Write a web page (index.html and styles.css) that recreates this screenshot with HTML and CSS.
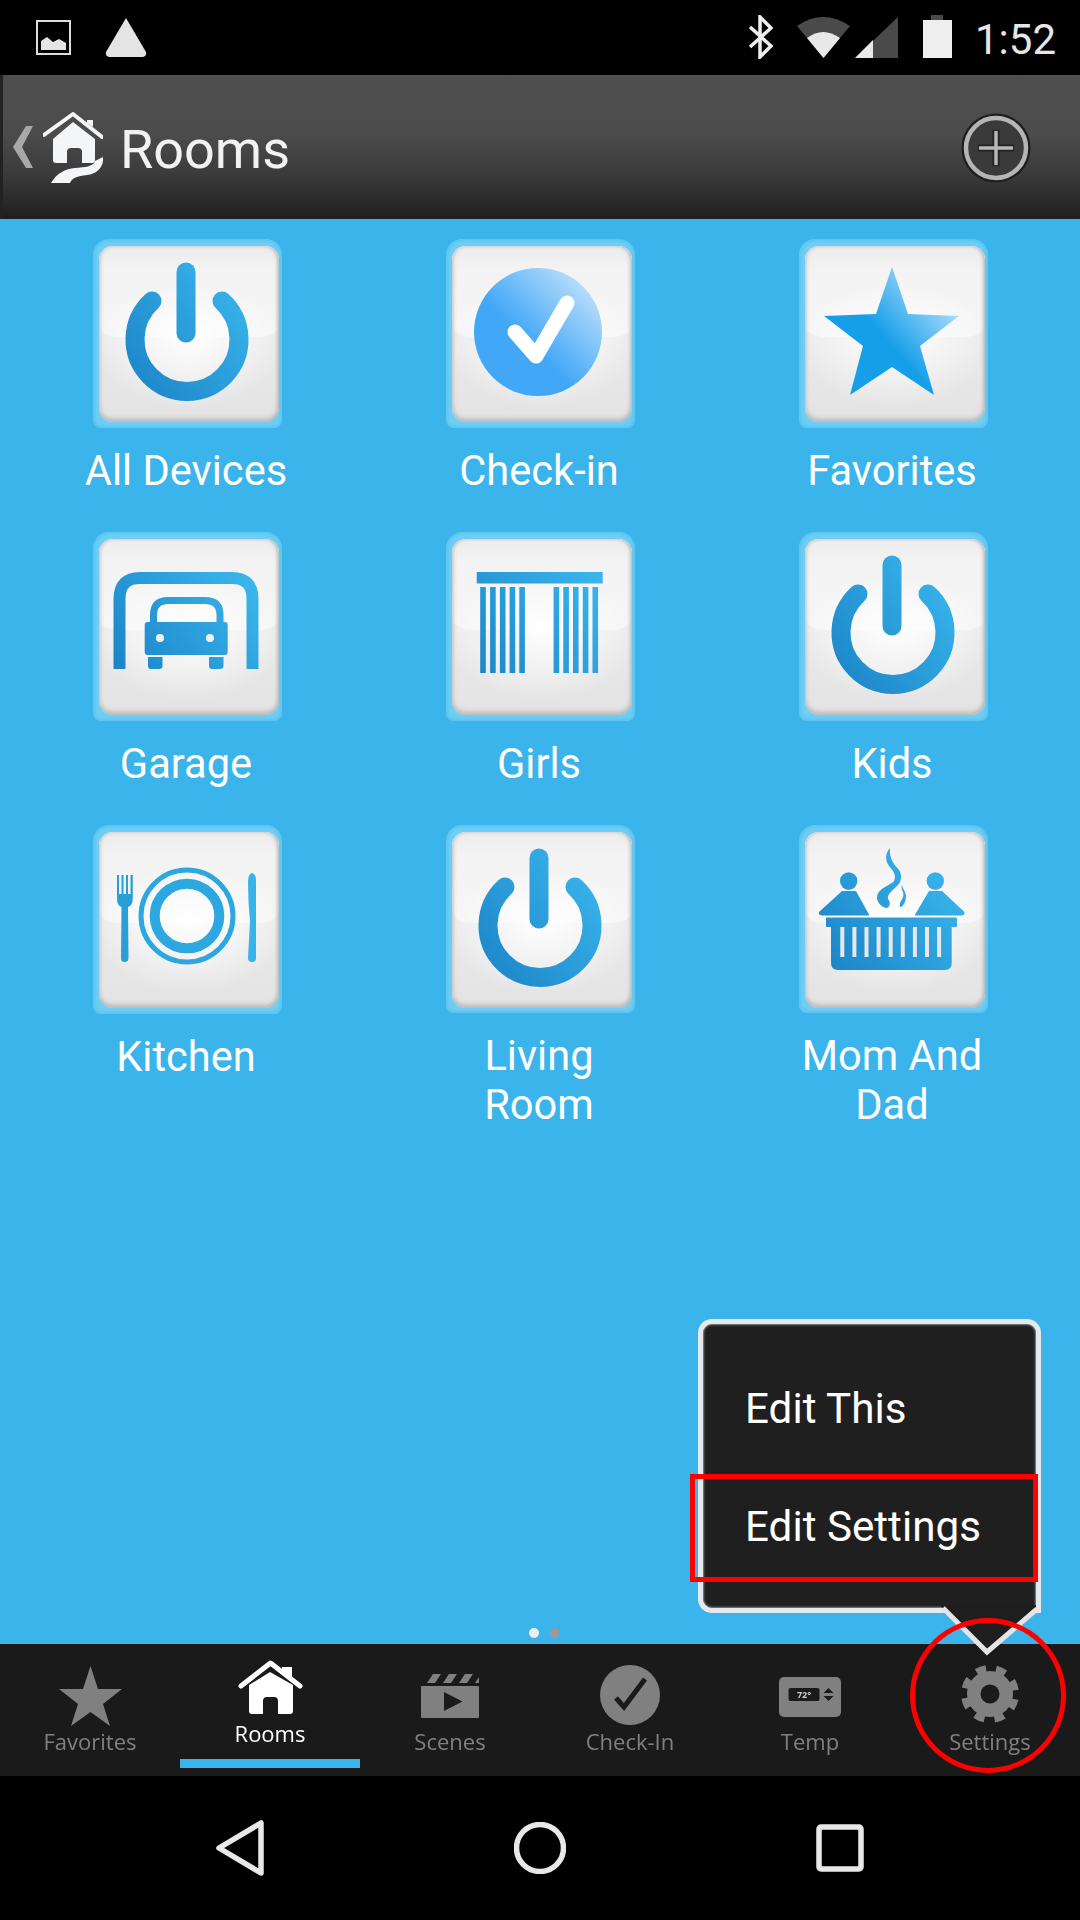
FILE: index.html
```html
<!DOCTYPE html>
<html lang="en">
<head>
	<meta charset="UTF-8">
	<title>Rooms</title>
	<link rel="stylesheet" href="styles.css">
</head>
<body>
	<svg class="defs" aria-hidden="true">
		<defs>
			<linearGradient id="blue" gradientUnits="userSpaceOnUse" x1="20" y1="145" x2="160" y2="35">
				<stop offset="0" stop-color="#1a82c6"/>
				<stop offset="1" stop-color="#3cb9ef"/>
			</linearGradient>
			<linearGradient id="checkFill" gradientUnits="userSpaceOnUse" x1="45" y1="125" x2="130" y2="40">
				<stop offset="0.35" stop-color="#42a7f6"/>
				<stop offset="1" stop-color="#b4dcfb"/>
			</linearGradient>
			<linearGradient id="starFill" gradientUnits="userSpaceOnUse" x1="55" y1="120" x2="135" y2="50">
				<stop offset="0.35" stop-color="#159fe9"/>
				<stop offset="1" stop-color="#a6d9fb"/>
			</linearGradient>
			<symbol id="power" viewBox="0 0 180 176">
				<path d="M53 55A52 52 0 1 0 123 55" fill="none" stroke="url(#blue)" stroke-width="19" stroke-linecap="round"/>
				<path d="M87 26V87" fill="none" stroke="url(#blue)" stroke-width="19" stroke-linecap="round"/>
			</symbol>
		</defs>
	</svg>
	<div class="app">
		<div class="status-bar">
			<svg class="st-image" viewBox="0 0 35 44"><rect x="1" y="6" width="33" height="33" fill="none" stroke="#ddd" stroke-width="2"/><path d="M5 35V26L11 22L17 27L23 24L30 28V35Z" fill="#e4e4e4"/></svg>
			<svg class="st-alert" viewBox="0 0 42 44"><path d="M21 3L41 37Q42 41 38 42H4Q0 41 1 37Z" fill="#e4e4e4"/></svg>
			<svg class="st-bt" viewBox="0 0 25 44"><path d="M2 12L23 31L12 42V2L23 13L2 32" fill="none" stroke="#eee" stroke-width="3.5"/></svg>
			<svg class="st-wifi" viewBox="0 0 53 44"><path d="M0 11Q26 -7 53 11L26.500 43Z" fill="#4a4a4a"/><path d="M10 23Q26 11 43 23L26.500 43Z" fill="#e8e8e8"/></svg>
			<svg class="st-signal" viewBox="0 0 43 44"><path d="M43 2V43H0Z" fill="#4a4a4a"/><path d="M18 25V43H0Z" fill="#e8e8e8"/></svg>
			<svg class="st-battery" viewBox="0 0 29 44"><rect x="8" y="0" width="12" height="5" fill="#4a4a4a"/><rect x="0" y="5" width="29" height="38" fill="#eee"/></svg>
			<span class="clock">1:52</span>
		</div>
		<header class="title-bar">
			<svg class="back" viewBox="0 0 20 42"><path d="M20 0H13L0 21L13 42H20L9 21Z" fill="#a8a8a8"/></svg>
			<svg class="logo" viewBox="0 0 60 71">
				<path d="M1 23L30 2L59 25" fill="none" stroke="#f4f5f7" stroke-width="4" stroke-linejoin="round" stroke-linecap="round"/>
				<path d="M30 10L52 27V48Q52 51 49 51H39V40Q39 36 35 36H28Q24 36 24 40V51H13Q10 51 10 48V27Z" fill="#f4f5f7"/>
				<path d="M44 8H50V15L44 11Z" fill="#f4f5f7"/>
				<path d="M8 71C14 61 22 57 32 56C42 55 50 55 52 49L60 45C61 55 54 62 44 63C34 64 29 66 27 71Z" fill="#f4f5f7"/>
			</svg>
			<h1 class="page-title">Rooms</h1>
			<svg class="add" viewBox="0 0 70 72">
				<circle cx="35" cy="36" r="33" fill="#2c2c2c" stroke="#1f1f1f" stroke-width="3"/>
				<circle cx="35" cy="36" r="30" fill="#3a3a3a" stroke="#b5b5b5" stroke-width="4.500"/>
				<path d="M35 18V54M17 36H53" stroke="#222" stroke-width="7"/>
				<path d="M35 19V53M18 36H52" stroke="#b8b8b8" stroke-width="3.500"/>
			</svg>
		</header>
		<main class="rooms">
			<div class="room">
				<div class="tile"><div class="face"><svg class="glyph" viewBox="0 0 180 176"><use href="#power"/></svg></div></div>
				<div class="room-name">All Devices</div>
			</div>
			<div class="room">
				<div class="tile"><div class="face">
					<svg class="glyph" viewBox="0 0 180 176">
						<circle cx="86" cy="86" r="64" fill="url(#checkFill)"/>
						<path d="M63 86L84 110L115 57" fill="none" stroke="#fff" stroke-width="15" stroke-linecap="round" stroke-linejoin="round"/>
					</svg>
				</div></div>
				<div class="room-name">Check-in</div>
			</div>
			<div class="room">
				<div class="tile"><div class="face">
					<svg class="glyph" viewBox="0 0 180 176">
						<path d="M87 21L103 68L154 70L115 100L129 149L87 121L45 149L58 100L19 70L71 68Z" fill="url(#starFill)"/>
					</svg>
				</div></div>
				<div class="room-name">Favorites</div>
			</div>
			<div class="room">
				<div class="tile"><div class="face">
					<svg class="glyph" viewBox="0 0 180 176">
						<path d="M20.500 130V60Q20.500 39 41 39H133Q153.500 39 153.500 60V130" fill="none" stroke="url(#blue)" stroke-width="12"/>
						<path d="M54.500 84V76Q54.500 61.500 69 61.500H106Q121 61.500 121 76V84" fill="none" stroke="url(#blue)" stroke-width="7"/>
						<rect x="45.700" y="83" width="83" height="33" rx="3" fill="url(#blue)"/>
						<path d="M49 118H63.500V127Q63.500 130 60 130H52Q49 130 49 127Z" fill="url(#blue)"/>
						<path d="M110 118H124.500V127Q124.500 130 121 130H113Q110 130 110 127Z" fill="url(#blue)"/>
						<circle cx="61" cy="99" r="4" fill="#f2f2f2"/>
						<circle cx="111" cy="99" r="4" fill="#f2f2f2"/>
					</svg>
				</div></div>
				<div class="room-name">Garage</div>
			</div>
			<div class="room">
				<div class="tile"><div class="face">
					<svg class="glyph" viewBox="0 0 180 176">
						<rect x="24.700" y="33" width="126" height="11.500" fill="url(#blue)"/>
						<path d="M31 48V134M40.900 48V134M50.700 48V134M60.400 48V134M70.100 48V134M104.400 48V134M114.100 48V134M123.800 48V134M133.600 48V134M143.300 48V134" fill="none" stroke="url(#blue)" stroke-width="5.600"/>
					</svg>
				</div></div>
				<div class="room-name">Girls</div>
			</div>
			<div class="room">
				<div class="tile"><div class="face"><svg class="glyph" viewBox="0 0 180 176"><use href="#power"/></svg></div></div>
				<div class="room-name">Kids</div>
			</div>
			<div class="room">
				<div class="tile"><div class="face">
					<svg class="glyph" viewBox="0 0 180 176">
						<circle cx="88" cy="84" r="46" fill="none" stroke="#2da7e0" stroke-width="5"/>
						<circle cx="88" cy="84" r="32.300" fill="none" stroke="#2da7e0" stroke-width="10"/>
						<path d="M18 43H20V62H22.500V43H24.500V62H27V43H29V62H31.500V43H33.800V66Q33.800 74 29 75L29.500 126Q29.500 130 25.500 130Q22 130 22 126L22.500 75Q18 74 18 66Z" fill="#2a9ed9"/>
						<path d="M153 41Q157 42 157 48V126Q157 130 153 130Q149 130 149 126L151 90Q149 70 149 50Q149 42 153 41Z" fill="#38b3ea"/>
					</svg>
				</div></div>
				<div class="room-name">Kitchen</div>
			</div>
			<div class="room">
				<div class="tile"><div class="face"><svg class="glyph" viewBox="0 0 180 176"><use href="#power"/></svg></div></div>
				<div class="room-name">Living Room</div>
			</div>
			<div class="room">
				<div class="tile"><div class="face">
					<svg class="glyph" viewBox="0 0 180 176">
						<circle cx="43.700" cy="49" r="8.700" fill="url(#blue)"/>
						<circle cx="130.300" cy="49" r="8.700" fill="url(#blue)"/>
						<path d="M14 80L37 59H51L64.500 83.500H17Q13 83 14 80Z" fill="url(#blue)"/>
						<path d="M109.500 83.500L124 59H137L159.500 80Q160 83 157 83.500Z" fill="url(#blue)"/>
						<path d="M85 16C80 22 80 28 84 34C88 39 92 43 89 49C85 54 72 56 72 66C72 71 78 76 82 76C85 75 86 70 83 67C82 62 88 58 92 54C97 50 97 42 94 38C90 33 84 28 85 16Z" fill="url(#blue)"/>
						<path d="M97 53C95 58 100 60 98 65C97 68 94 70 95 75C99 75 101 68 101 64C101 60 98 58 97 53Z" fill="url(#blue)"/>
						<rect x="21" y="85.500" width="131" height="9.500" rx="1" fill="url(#blue)"/>
						<path d="M26 95H146.700V131Q146.700 138 140 138H33Q26 138 26 131Z" fill="url(#blue)"/>
						<path d="M37.300 95V125M49.400 95V125M61.500 95V125M73.600 95V125M85.700 95V125M97.800 95V125M109.900 95V125M122 95V125M134.100 95V125" stroke="#e8e8e8" stroke-width="4"/>
					</svg>
				</div></div>
				<div class="room-name">Mom And Dad</div>
			</div>
			<div class="pager"><span class="dot on"></span><span class="dot"></span></div>
		</main>
		<nav class="tabs">
			<div class="tab">
				<svg class="tab-icon" viewBox="0 0 70 66"><path d="M35.500 5L43 28H67L48 43L55 65L35.500 51L16 65L23 43L4 28H28Z" fill="#808080"/></svg>
				<span class="tab-label">Favorites</span>
			</div>
			<div class="tab active">
				<svg class="tab-icon" viewBox="0 0 70 66">
					<path d="M14 32L35 19L58 32V58Q58 61 55 61H43V48Q43 44 39 44H32Q28 44 28 48V61H17Q14 61 14 58Z" fill="#fff"/>
					<path d="M6 33L35.500 10L65 33" fill="none" stroke="#fff" stroke-width="5" stroke-linecap="round" stroke-linejoin="round"/>
					<path d="M47 14H57V27L47 19Z" fill="#fff"/>
				</svg>
				<span class="tab-label">Rooms</span>
			</div>
			<div class="tab">
				<svg class="tab-icon" viewBox="0 0 70 66">
					<path d="M12 22L18 13H26L20 22ZM28 22L34 13H42L36 22ZM44 22L50 13H58L52 22ZM60 22L64 16V22Z" fill="#808080"/>
					<rect x="6" y="25" width="58" height="32" rx="1" fill="#808080"/>
					<path d="M29 31V50L47.500 40.500Z" fill="#1a1a1a"/>
				</svg>
				<span class="tab-label">Scenes</span>
			</div>
			<div class="tab">
				<svg class="tab-icon" viewBox="0 0 70 66">
					<circle cx="35" cy="34" r="30" fill="#808080"/>
					<path d="M21 37L29 46L50 18" fill="none" stroke="#1a1a1a" stroke-width="5"/>
				</svg>
				<span class="tab-label">Check-In</span>
			</div>
			<div class="tab">
				<svg class="tab-icon" viewBox="0 0 70 66">
					<rect x="4" y="16" width="62" height="40" rx="5" fill="#808080"/>
					<rect x="13.500" y="27" width="31" height="13" rx="2" fill="#1a1a1a"/>
					<text x="29" y="36.500" text-anchor="middle" class="temp-text">72°</text>
					<path d="M48.500 32L53.500 27L58.500 32ZM48.500 35L53.500 40L58.500 35Z" fill="#1a1a1a"/>
				</svg>
				<span class="tab-label">Temp</span>
			</div>
			<div class="tab">
				<svg class="tab-icon" viewBox="0 0 70 66">
					<circle cx="35" cy="33" r="23" fill="#808080"/>
					<circle cx="35" cy="33" r="25.500" fill="none" stroke="#808080" stroke-width="7" stroke-dasharray="10 10.030" transform="rotate(12 35 33)"/>
					<circle cx="35" cy="33" r="9.500" fill="#1a1a1a"/>
				</svg>
				<span class="tab-label">Settings</span>
			</div>
		</nav>
		<div class="system-nav">
			<svg class="sys-back" viewBox="0 0 48 56"><path d="M3 28L45 3V53Z" fill="none" stroke="#e8e8e8" stroke-width="5.500" stroke-linejoin="round"/></svg>
			<svg class="sys-home" viewBox="0 0 52 52"><circle cx="26" cy="26" r="23.500" fill="none" stroke="#e8e8e8" stroke-width="5.500"/></svg>
			<svg class="sys-recent" viewBox="0 0 48 48"><rect x="3" y="3" width="42" height="42" rx="2" fill="none" stroke="#e8e8e8" stroke-width="5.500"/></svg>
		</div>

		<div class="popup">
			<div class="popup-item">Edit This</div>
			<div class="popup-item">Edit Settings</div>
		</div>
		<svg class="popup-arrow" viewBox="0 0 101 52">
			<path d="M0 0H96V3L47 47L3 3Z" fill="#1e1e1e"/>
			<path d="M3 3L47 47L97 4" fill="none" stroke="#e4e4e4" stroke-width="5"/>
		</svg>
		<div class="mark-rect"></div>
		<div class="mark-circle"></div>
	</div>
</body>
</html>
```

FILE: styles.css
```css
* {
	box-sizing: border-box;
}
body {
	margin: 0;
	background: #000;
	font-family: Roboto, "Liberation Sans", sans-serif;
}
.defs {
	position: absolute;
	width: 0;
	height: 0;
}
.app {
	position: relative;
	display: flex;
	flex-direction: column;
	width: 1080px;
	height: 1920px;
	overflow: hidden;
}

/* status bar */
.status-bar {
	display: flex;
	align-items: flex-start;
	height: 75px;
	padding-top: 15px;
	background: #000;
}
.status-bar svg {
	height: 44px;
	flex: none;
}
.st-image {
	width: 35px;
	margin-left: 36px;
}
.st-alert {
	width: 42px;
	margin-left: 34px;
}
.st-bt {
	width: 25px;
	margin-left: auto;
}
.st-wifi {
	width: 53px;
	margin-left: 24px;
}
.st-signal {
	width: 43px;
	margin-left: 5px;
}
.st-battery {
	width: 29px;
	margin-left: 25px;
}
.clock {
	width: 80px;
	margin: 0 25px 0 23px;
	font-size: 42px;
	line-height: 50px;
	color: #e6e6e6;
}

/* title bar */
.title-bar {
	display: flex;
	align-items: center;
	height: 144px;
	border-left: 3px solid #222;
	background: linear-gradient(#4e4e4e 0, #4c4c4c 40%, #3a3a3a 70%, #1e1e1e 100%);
}
.back {
	width: 20px;
	height: 42px;
	margin-left: 10px;
}
.logo {
	width: 60px;
	height: 71px;
	margin-left: 10px;
}
.page-title {
	margin: 5px 0 0 17px;
	font-size: 54px;
	font-weight: 400;
	color: #f2f2f2;
}
.add {
	width: 70px;
	height: 72px;
	margin: 2px 49px 0 auto;
}

/* room grid */
.rooms {
	position: relative;
	flex: 1;
	display: grid;
	grid-template-columns: repeat(3, 353px);
	grid-auto-rows: 293px;
	padding: 20px 0 0 11px;
	background: #3ab4ea;
}
.room {
	display: flex;
	flex-direction: column;
	align-items: center;
}
.tile {
	width: 189px;
	height: 189px;
	padding: 7px 3px 5px 6px;
	border-radius: 16px 16px 8px 8px;
	background: #70cef4;
	box-shadow: inset 0 0 4px 1px #50bfee;
	filter: blur(0.6px);
}
.face {
	position: relative;
	height: 176px;
	overflow: hidden;
	border-radius: 14px;
	background:
		radial-gradient(ellipse 55% 42% at 50% 50%, #fff 0, rgba(255, 255, 255, 0) 100%),
		linear-gradient(#ebebeb 50%, #e3e3e3 100%);
}
.face::before {
	content: "";
	position: absolute;
	left: 0;
	right: 0;
	top: 0;
	height: 91px;
	border-radius: 0 0 20px 20px / 0 0 12px 12px;
	background:
		radial-gradient(ellipse 50% 60% at 50% 100%, #fff 0, rgba(255, 255, 255, 0) 100%),
		linear-gradient(#ececec 0, #f3f3f3 25%, #f6f6f6 100%);
}
.face::after {
	content: "";
	position: absolute;
	left: 0;
	right: 0;
	top: 0;
	bottom: 0;
	border-radius: 14px;
	box-shadow: inset 0 -5px 5px -2px #b9b9b9, inset -3px 0 4px -2px #aaa, inset 3px 0 4px -2px #c4c4c4, inset 0 2px 3px -1px #ddd;
}
.glyph {
	position: relative;
	display: block;
	width: 180px;
	height: 176px;
}
.room-name {
	max-width: 215px;
	margin: 18px 3px 0 0;
	font-size: 41.6px;
	line-height: 49px;
	text-align: center;
	color: #fff;
}
.pager {
	position: absolute;
	left: 529px;
	bottom: 6px;
	display: flex;
	gap: 11px;
}
.dot {
	width: 10px;
	height: 10px;
	border-radius: 50%;
	background: #9a9a9a;
}
.dot.on {
	background: #eee;
}

/* bottom tabs */
.tabs {
	display: flex;
	height: 132px;
	background: #1a1a1a;
}
.tab {
	display: flex;
	flex-direction: column;
	align-items: center;
	justify-content: flex-end;
	width: 180px;
	padding-bottom: 21px;
}
.tab-icon {
	display: block;
	width: 70px;
	height: 66px;
	filter: blur(0.4px);
}
.tab-label {
	font-family: "Open Sans", "Noto Sans", sans-serif;
	font-size: 22px;
	line-height: 28px;
	color: #808080;
	filter: blur(0.3px);
}
.tab.active {
	padding-bottom: 8px;
}
.tab.active .tab-label {
	margin-bottom: 12px;
	color: #fff;
}
.tab.active::after {
	content: "";
	width: 100%;
	height: 9px;
	background: #3ab4ea;
}
.temp-text {
	font-family: "Open Sans", sans-serif;
	font-size: 9px;
	font-weight: 700;
	fill: #ccc;
}

/* android buttons */
.system-nav {
	height: 144px;
	display: flex;
	align-items: flex-start;
	background: #000;
}
.sys-back {
	width: 48px;
	height: 56px;
	margin: 44px 0 0 216px;
}
.sys-home {
	width: 52px;
	height: 52px;
	margin: 46px 0 0 250px;
}
.sys-recent {
	width: 48px;
	height: 48px;
	margin: 48px 0 0 250px;
}

/* popup menu and annotations */
.popup {
	position: absolute;
	left: 698px;
	top: 1319px;
	width: 343px;
	height: 294px;
	padding: 26px 0 0 42px;
	border: 5.5px solid #e6e9eb;
	border-radius: 14px 14px 0 14px;
	background: #1f1f1f;
	box-shadow: inset 0 0 2px 1px #8a8a8a;
}
.popup-item {
	height: 118px;
	font-size: 42.2px;
	line-height: 118px;
	color: #fff;
}
.popup-arrow {
	position: absolute;
	left: 940px;
	top: 1605px;
	width: 101px;
	height: 52px;
}
.mark-rect {
	position: absolute;
	left: 690px;
	top: 1474px;
	width: 348px;
	height: 108px;
	border: 5px solid #f00;
}
.mark-circle {
	position: absolute;
	left: 910px;
	top: 1618px;
	width: 156px;
	height: 155px;
	border: 5px solid #f00;
	border-radius: 50%;
}
```
